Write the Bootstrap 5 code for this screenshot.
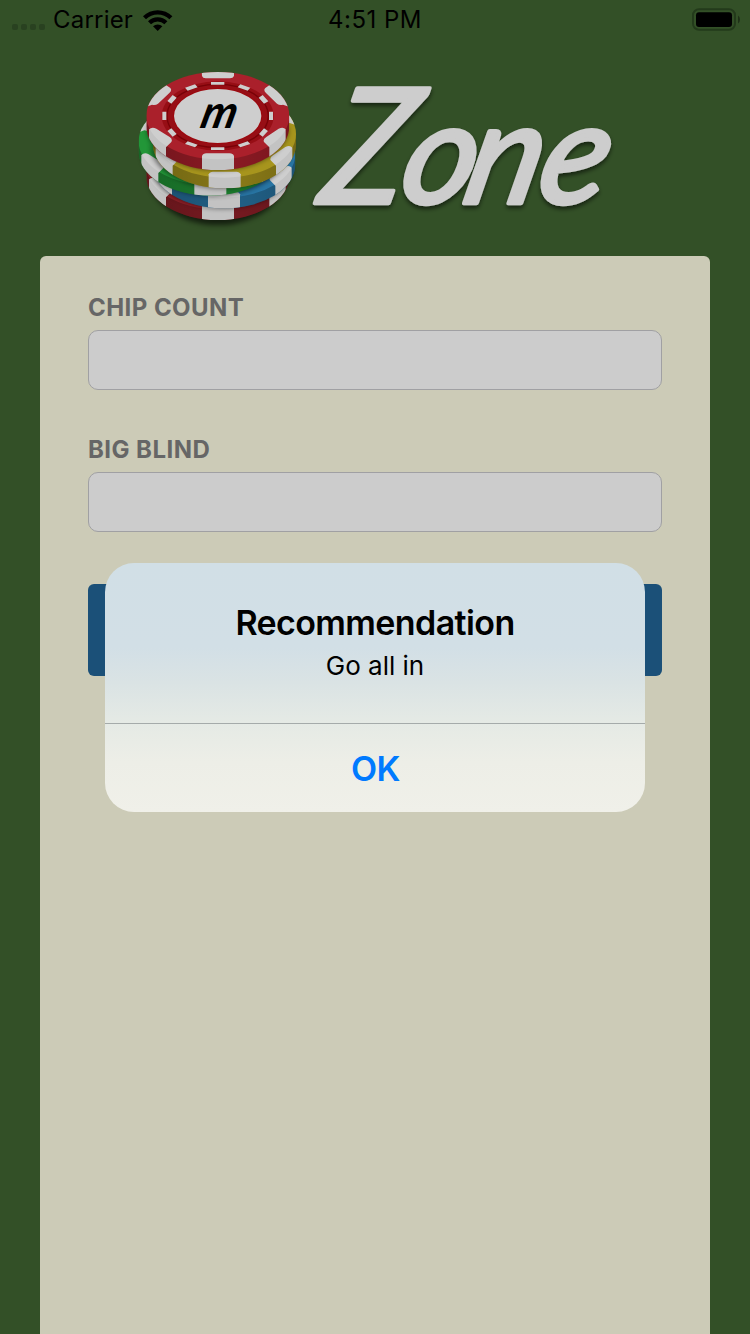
<!DOCTYPE html>
<html lang="en">
<head>
<meta charset="utf-8">
<meta name="viewport" content="width=device-width, initial-scale=1">
<title>M Zone</title>
<link href="https://cdn.jsdelivr.net/npm/bootstrap@5.3.0/dist/css/bootstrap.min.css" rel="stylesheet">
<style>
body{background:#335027;font-family:Inter,"Liberation Sans",sans-serif;color:#000}
.statusbar{height:40px;font-size:24px;line-height:40px;padding:0 10px 0 12px}
.statusbar span{white-space:nowrap}
.statusbar .side{width:299px}
.carrier{margin-left:7px;letter-spacing:.2px}
.clock{letter-spacing:.5px;margin-left:-2px}
.wifi{margin-left:9px}
.brand{width:490px;height:170px;margin:20px 0 26px 130px}
.brand text{font-family:Lato,sans-serif;font-style:italic;font-weight:700}
.brand .word{font-weight:400;fill:#cdcdcd;stroke:#cdcdcd;stroke-width:13;stroke-linejoin:round}
.panel{background:#cccbb7;border-radius:6px 6px 0 0;margin:0 40px;padding:37px 48px 0}
.panel .form-label{font-size:24px;font-weight:700;line-height:30px;color:#666;margin-bottom:7px;display:block;letter-spacing:.45px}
.panel .form-control{background:#ccc;border:1px solid #a0a0a3;border-radius:10px;height:60px}
.panel .field{margin-bottom:45px}
.panel .btn{background:#1b5078;height:92px;border-radius:6px;border:0;margin-top:7px}
.alert-box{left:105px;top:563px;width:540px;height:249px;border-radius:29px;overflow:hidden;background:linear-gradient(#d1dfe6 0,#d2dfe6 34%,#dae3e4 48%,#e5eae5 64%,#edeee7 80%,#f0f0e9 100%)}
.alert-text{height:161px;border-bottom:1px solid #a5abaa}
.alert-text h1{font-size:34px;line-height:42px;font-weight:600;margin:0;padding-top:39px;letter-spacing:-.6px}
.alert-text p{font-size:26px;line-height:34px;margin:5px 0 0}
.alert-ok{height:88px;color:#007aff;font-size:34px;font-weight:600;background:none;border:0;padding:0 0 0 1px;letter-spacing:-.5px}
</style>
</head>
<body class="d-flex flex-column vh-100 overflow-hidden">
<header class="statusbar d-flex align-items-center justify-content-between flex-shrink-0">
  <div class="side d-flex align-items-center">
    <svg width="34" height="40"><g fill="#294120"><rect y="24" width="6" height="6" rx="2"/><rect x="9" y="24" width="6" height="6" rx="2"/><rect x="18" y="24" width="6" height="6" rx="2"/><rect x="27" y="24" width="6" height="6" rx="2"/></g></svg>
    <span class="carrier">Carrier</span>
    <svg class="wifi" width="32" height="24" viewBox="0 0 32 24"><path d="M1 8.2A21 21 0 0 1 30.4 8.2L27.4 11.3A16.5 16.5 0 0 0 4 11.3Z"/><path d="M6 13.2A14 14 0 0 1 25.4 13.2L22.4 16.2A9.6 9.6 0 0 0 9 16.2Z"/><path d="M11 18.2A7 7 0 0 1 20.4 18.2L15.7 23Z"/></svg>
  </div>
  <span class="clock">4:51 PM</span>
  <div class="side d-flex justify-content-end"><svg width="48" height="24" viewBox="0 0 48 24"><rect x="1" y="1.2" width="42" height="20.6" rx="6" fill="none" stroke="#233a1b" stroke-width="2"/><rect x="4" y="4.2" width="36" height="14.8" rx="3"/><path d="M46 7.5Q48 9 48 11.5T46 15.5Z" fill="#1e3117"/></svg></div>
</header>
<svg class="brand d-block flex-shrink-0" viewBox="0 0 1470 510" overflow="visible">
  <defs>
    <clipPath id="chipClip"><path d="M49 167A214.5 131 0 0 1 478 167V198A214.5 132 0 0 1 49 198Z"/></clipPath>
    <linearGradient id="sideShade"><stop stop-opacity=".28"/><stop offset=".35" stop-opacity=".2"/><stop offset=".6" stop-opacity=".14"/><stop offset="1" stop-opacity=".25"/></linearGradient>
    <filter id="soft" x="-20%" y="-20%" width="140%" height="150%"><feGaussianBlur stdDeviation="8"/></filter>
    <filter id="wordShadow" x="-10%" y="-10%" width="120%" height="130%"><feDropShadow dx="0" dy="9" stdDeviation="6" flood-opacity=".55"/></filter>
    <g id="chip">
      <g clip-path="url(#chipClip)">
        <rect x="40" y="30" width="450" height="305" fill="currentColor"/>
        <path d="M49 167A214.5 131 0 0 0 478 167V345H49Z" fill="url(#sideShade)"/>
        <g fill="#cecece">
          <path d="M215 30H312V48Q309 55 300 55H227Q218 55 216 48Z"/>
          <path d="M40 130L100 70 121 84Q127 91 118 99L84 131Q76 137 66 134L50 140Z"/>
          <path d="M486 130L426 70 406 84Q399 91 408 99L441 131Q449 137 459 134L477 140Z"/>
          <path d="M57 208Q66 199 79 206L119 231Q129 238 124 246L108 262V345H57Z"/>
          <path d="M467 208Q460 199 446 206L409 231Q398 238 402 246L418 262V345H467Z"/>
          <path d="M216 345V288Q219 280 229 280H299Q309 280 312 288V345Z"/>
        </g>
        <path d="M49 167A214.5 131 0 0 0 478 167V345H49Z" opacity=".05"/>
      </g>
    </g>
    <path id="contact" d="M52 190A214 132 0 0 0 475 190V218A214 132 0 0 1 52 218Z" filter="url(#soft)" opacity=".55"/>
  </defs>
  <path d="M49 330A214 132 0 0 0 478 330A214 165 0 0 1 49 330Z" filter="url(#soft)" opacity=".6"/>
  <g transform="translate(0 150)" color="#912028"><use href="#chip"/></g>
  <use href="#contact" x="14" y="115"/>
  <g transform="translate(18 115)" color="#2875a4"><use href="#chip"/></g>
  <use href="#contact" x="-15" y="77"/>
  <g transform="translate(-23 77)" color="#229638"><use href="#chip"/></g>
  <use href="#contact" x="12" y="55"/>
  <g transform="translate(20 55)" color="#a7951d"><use href="#chip"/></g>
  <use href="#contact"/>
  <g color="#aa202b"><use href="#chip"/></g>
  <ellipse cx="263" cy="168" rx="168" ry="104" fill="#970e15"/>
  <ellipse cx="263" cy="168" rx="152" ry="95" fill="none" stroke="#780207" stroke-width="4"/>
  <g fill="#cecece">
    <path d="M243 66H283V74H243ZM243 262H283V270H243ZM97 155H109V180H97ZM417 155H429V180H417Z"/>
    <path d="M165 83L195 73 203 82 173 92ZM323 82L331 73 361 83 353 92ZM112 123L128 105 140 113 124 131ZM386 113L398 105 415 124 402 131ZM112 213L124 205 140 222 128 230ZM387 222L402 205 414 213 398 230ZM173 244L203 254 195 262 165 252ZM323 254L353 244 361 252 331 262Z"/>
  </g>
  <ellipse cx="263" cy="168" rx="134" ry="84" fill="#9d070d"/>
  <ellipse cx="263" cy="168" rx="131" ry="81" fill="#cecece"/>
  <text transform="translate(206 203) skewX(-14)" font-size="138" font-weight="400" textLength="106" lengthAdjust="spacingAndGlyphs">m</text>
  <g filter="url(#wordShadow)">
    <text class="word" transform="translate(0 430) skewX(-13)" font-size="425"><tspan x="560" font-size="480" textLength="250" lengthAdjust="spacingAndGlyphs">Z</tspan><tspan x="797">o</tspan><tspan x="990">n</tspan><tspan x="1210">e</tspan></text>
  </g>
</svg>
<main class="panel flex-grow-1">
  <div class="field"><label class="form-label" for="chips">CHIP COUNT</label><input class="form-control" id="chips"></div>
  <div class="field"><label class="form-label" for="blind">BIG BLIND</label><input class="form-control" id="blind"></div>
  <button class="btn w-100" type="button"></button>
</main>
<section class="alert-box position-absolute text-center" role="alertdialog">
  <div class="alert-text"><h1>Recommendation</h1><p>Go all in</p></div>
  <button class="alert-ok w-100" type="button">OK</button>
</section>
<script src="https://cdn.jsdelivr.net/npm/bootstrap@5.3.0/dist/js/bootstrap.bundle.min.js"></script>
</body>
</html>
